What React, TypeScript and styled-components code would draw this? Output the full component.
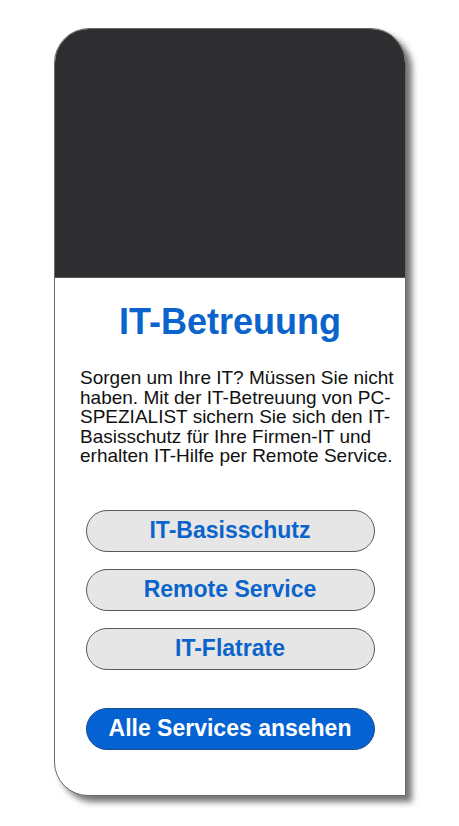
import React from 'react';
import styled, { createGlobalStyle } from 'styled-components';

const GlobalStyle = createGlobalStyle`
  html, body {
    margin: 0;
    padding: 0;
    background: #ffffff;
    font-family: 'Liberation Sans', Arial, sans-serif;
  }
`;

// Layout
const Page = styled.div`
  padding: 28px 0 30px 54px;
`;

const Card = styled.div`
  width: 352px;
  height: 768px;
  box-sizing: border-box;
  background: #ffffff;
  border: 1px solid #6a6a6a;
  border-radius: 35px 35px 0 34px;
  box-shadow: 6px 6px 6px rgba(0, 0, 0, 0.55);
  overflow: hidden;
  display: flex;
  flex-direction: column;
  align-items: center;
`;

const Hero = styled.div`
  align-self: stretch;
  height: 248px;
  flex-shrink: 0;
  background: #2e2e30;
  border-bottom: 1px solid #555;
`;

const Title = styled.h1`
  margin: 26px 0 0;
  font-size: 36px;
  line-height: 36px;
  font-weight: 700;
  color: #0b64cb;
  text-align: center;
`;

const Intro = styled.p`
  margin: 28px 0 0;
  align-self: flex-start;
  padding-left: 25px;
  width: 318px;
  font-size: 19px;
  line-height: 19.5px;
  color: #111;
`;

const ButtonList = styled.div`
  margin-top: 44px;
  display: flex;
  flex-direction: column;
  align-items: center;
  gap: 17px;
`;

const Pill = styled.button<{ $primary?: boolean }>`
  width: 289px;
  height: 42px;
  box-sizing: border-box;
  border-radius: 21px;
  border: 1px solid ${p => (p.$primary ? '#1d4f8f' : '#5a5a5a')};
  background: ${p => (p.$primary ? '#0562d3' : '#e6e6e6')};
  color: ${p => (p.$primary ? '#ffffff' : '#0b64cb')};
  font-family: 'Liberation Sans', Arial, sans-serif;
  font-size: 23px;
  font-weight: 700;
  display: flex;
  align-items: center;
  justify-content: center;
  padding: 0;
  cursor: pointer;
`;

const CtaRow = styled.div`
  margin-top: 38px;
`;

const services = ['IT-Basisschutz', 'Remote Service', 'IT-Flatrate'];

export default function App() {
  return (
    <>
      <GlobalStyle />
      <Page>
        <Card>
          <Hero />
          <Title>IT-Betreuung</Title>
          <Intro>
            Sorgen um Ihre IT? Müssen Sie nicht haben. Mit der IT-Betreuung von
            PC-SPEZIALIST sichern Sie sich den IT-Basisschutz für Ihre Firmen-IT
            und erhalten IT-Hilfe per Remote Service.
          </Intro>
          <ButtonList>
            {services.map(s => (
              <Pill key={s}>{s}</Pill>
            ))}
          </ButtonList>
          <CtaRow>
            <Pill $primary>Alle Services ansehen</Pill>
          </CtaRow>
        </Card>
      </Page>
    </>
  );
}
